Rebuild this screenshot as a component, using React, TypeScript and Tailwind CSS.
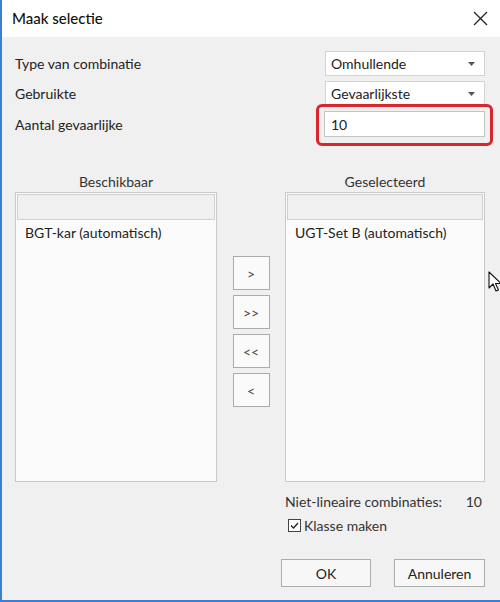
import React from 'react'

// Small down-arrow used by the combo boxes
function ComboArrow() {
  return (
    <svg width="7" height="4" viewBox="0 0 7 4" className="shrink-0">
      <path d="M0 0 L7 0 L3.5 4 Z" fill="#555" />
    </svg>
  )
}

function Combo({ value }: { value: string }) {
  return (
    <div className="flex items-center justify-between w-[160px] h-[25px] bg-white border border-[#d4d4d4] pl-[5px] pr-[9px]">
      <span className="text-[14px] text-[#222]">{value}</span>
      <ComboArrow />
    </div>
  )
}

function ListBox({ items }: { items: string[] }) {
  return (
    <div className="flex flex-col h-full bg-[#fbfbfb] border border-[#c9c9c9] p-[1px]">
      <div className="h-[26px] bg-[#f0f0f0] border border-[#cfcfcf]" />
      {items.map(item => (
        <div key={item} className="pl-[8px] pt-[2px] text-[14px] text-[#222]">{item}</div>
      ))}
    </div>
  )
}

function MoveButton({ label }: { label: string }) {
  return (
    <button className="w-[37px] h-[34px] bg-[#fafafa] border border-[#ababab] text-[14px] text-[#444] flex items-center justify-center">
      {label}
    </button>
  )
}

export default function App() {
  return (
    <div className="relative w-[500px] h-[602px] flex flex-col border-l-2 border-b-2 border-[#3b7fd2] bg-[#f0f0f0] font-['Lato','Noto_Sans',sans-serif] text-[#222] overflow-hidden">
      {/* Title bar */}
      <div className="flex items-center justify-between h-[37px] bg-white pl-[10px] pr-[12px] shrink-0">
        <span className="text-[15px] font-medium text-[#111]">Maak selectie</span>
        <svg width="15" height="15" viewBox="0 0 15 15">
          <path d="M1 1 L14 14 M14 1 L1 14" stroke="#222" strokeWidth="1.3" />
        </svg>
      </div>

      {/* Body */}
      <div className="flex-1 flex flex-col pl-[13px] pr-[15px] pt-[14px]">
        <div className="flex items-center justify-between">
          <span className="text-[14px]">Type van combinatie</span>
          <Combo value="Omhullende" />
        </div>
        <div className="flex items-center justify-between mt-[5px]">
          <span className="text-[14px]">Gebruikte</span>
          <Combo value="Gevaarlijkste" />
        </div>
        <div className="flex items-center justify-between mt-[5px]">
          <span className="text-[14px]">Aantal gevaarlijke</span>
          <div className="relative">
            <div className="w-[161px] h-[26px] bg-white border border-[#c4c4c4] flex items-center pl-[6px] text-[14px]">10</div>
            {/* red annotation frame */}
            <div className="absolute -left-[8px] -right-[8px] -top-[7px] -bottom-[9px] border-[3px] border-[#d8262f] rounded-[6px]" />
          </div>
        </div>

        {/* Column headers */}
        <div className="grid grid-cols-[202px_68px_200px] mt-[33px] h-[22px] items-center text-[14px] text-[#333]">
          <span className="text-center">Beschikbaar</span>
          <span />
          <span className="text-center">Geselecteerd</span>
        </div>

        {/* Lists and move buttons */}
        <div className="grid grid-cols-[202px_68px_200px] h-[290px]">
          <ListBox items={['BGT-kar (automatisch)']} />
          <div className="flex flex-col items-center gap-[5px] pt-[64px]">
            <MoveButton label=">" />
            <MoveButton label=">>" />
            <MoveButton label="<<" />
            <MoveButton label="<" />
          </div>
          <ListBox items={['UGT-Set B (automatisch)']} />
        </div>

        {/* Right-hand footer */}
        <div className="ml-[270px] flex flex-col">
          <div className="flex items-center justify-between mt-[9px] pr-[3px] text-[14px] text-[#333]">
            <span>Niet-lineaire combinaties:</span>
            <span>10</span>
          </div>
          <div className="flex items-center gap-[3px] mt-[3px] ml-[3px] text-[14px] text-[#333]">
            <div className="w-[13px] h-[13px] border border-[#444] bg-white flex items-center justify-center">
              <svg width="9" height="7" viewBox="0 0 9 7">
                <path d="M1 3.5 L3.5 6 L8 1" stroke="#222" strokeWidth="1.3" fill="none" />
              </svg>
            </div>
            <span>Klasse maken</span>
          </div>
          <div className="flex items-center justify-between mt-[23px]">
            <button className="w-[90px] h-[28px] -ml-[4px] bg-[#f7f7f7] border border-[#adadad] text-[14px] text-[#222]">OK</button>
            <button className="w-[91px] h-[28px] bg-[#f7f7f7] border border-[#adadad] text-[14px] text-[#222]">Annuleren</button>
          </div>
        </div>
      </div>

      {/* mouse cursor overlay */}
      <svg className="absolute left-[486px] top-[271px]" width="14" height="22" viewBox="0 0 14 22">
        <path d="M1 1 L1 17 L5 13 L8 20 L10.5 19 L7.5 12.5 L13 12.5 Z" fill="white" stroke="#111" strokeWidth="1.1" strokeLinejoin="round" />
      </svg>
    </div>
  )
}
